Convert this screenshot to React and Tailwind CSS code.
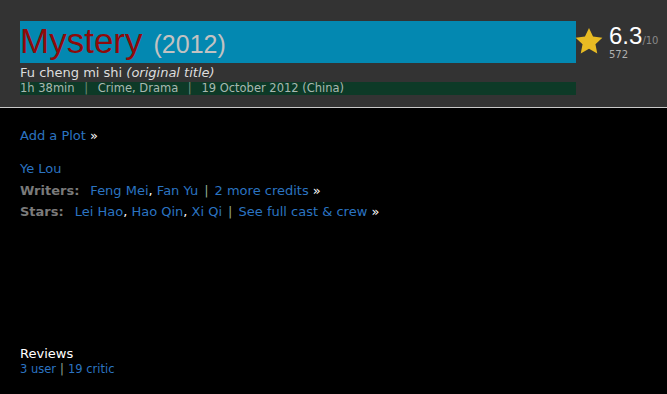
const WRITERS = ['Feng Mei', 'Fan Yu'];
const STARS = ['Lei Hao', 'Hao Qin', 'Xi Qi'];

const Link = ({ children }) => (
  <a href="#" className="text-[#2b74c2] hover:underline">{children}</a>
);

const Sep = () => <span className="text-[#8fa88f] mx-[6px]">|</span>;

const Star = () => (
  <svg width="30" height="28" viewBox="0 0 24 23" className="shrink-0">
    <path
      d="M12 0.8l3.3 7.1 7.7 0.9-5.7 5.3 1.5 7.6L12 17.9l-6.8 3.8 1.5-7.6L1 8.8l7.7-0.9z"
      fill="#e8bb23"
    />
  </svg>
);

export default function App() {
  return (
    <div
      className="w-[667px] h-[394px] bg-black text-[13px] overflow-hidden"
      style={{ fontFamily: '"DejaVu Sans", Verdana, sans-serif' }}
    >
      {/* Title header */}
      <div className="h-[108px] bg-[#333333] border-b border-[#c8c8c8] px-5 pt-[21px] flex">
        <div className="w-[556px] shrink-0">
          <h1
            className="h-[42px] bg-[#0388b1] flex items-end pb-[5px] leading-none"
            style={{ fontFamily: '"Liberation Sans", Arial, sans-serif' }}
          >
            <span className="text-[35px] text-[#8f0a0a]">Mystery</span>
            <span className="text-[25px] text-[#c2c2c2] ml-[11px] mb-[1px]">(2012)</span>
          </h1>
          <div className="text-[#dddddd] leading-[16px] mt-[2px]">
            Fu cheng mi shi <i>(original title)</i>
          </div>
          <div className="h-[13px] bg-[#0d3a27] text-[11.5px] leading-[13px] text-[#a8b8b0] mt-[1px] whitespace-nowrap">
            1h 38min <span className="mx-[6px] text-[#6f8c7c]">|</span> Crime, Drama{' '}
            <span className="mx-[6px] text-[#6f8c7c]">|</span> 19 October 2012 (China)
          </div>
        </div>
        <div className="flex items-start pt-[6px] -ml-[2px]">
          <Star />
          <div className="ml-[5px] -mt-[3px]">
            <div className="flex items-end leading-none">
              <span
                className="text-[24px] text-white"
                style={{ fontFamily: '"Liberation Sans", Arial, sans-serif' }}
              >
                6.3
              </span>
              <span className="text-[10px] text-[#8a8a8a] mb-[2px]">/10</span>
            </div>
            <div className="text-[10px] text-[#b0b0b0] leading-none mt-[2px]">572</div>
          </div>
        </div>
      </div>

      {/* Plot and credits */}
      <div className="px-5 pt-[17px]">
        <div className="leading-[21px]">
          <Link>Add a Plot</Link> <span className="text-white">»</span>
        </div>
        <div className="mt-[12px] leading-[21.5px]">
          <div><Link>Ye Lou</Link></div>
          <div className="whitespace-nowrap">
            <span className="font-bold text-[#7a7a7a] mr-[11px]">Writers:</span>
            {WRITERS.map((w, i) => (
              <span key={w}>
                <Link>{w}</Link>
                {i < WRITERS.length - 1 && <span className="text-white">, </span>}
              </span>
            ))}
            <Sep />
            <Link>2 more credits</Link> <span className="text-white">»</span>
          </div>
          <div className="whitespace-nowrap">
            <span className="font-bold text-[#7a7a7a] mr-[11px]">Stars:</span>
            {STARS.map((s, i) => (
              <span key={s}>
                <Link>{s}</Link>
                {i < STARS.length - 1 && <span className="text-white">, </span>}
              </span>
            ))}
            <Sep />
            <Link>See full cast &amp; crew</Link> <span className="text-white">»</span>
          </div>
        </div>

        {/* Reviews */}
        <div className="mt-[123px]">
          <div className="text-white leading-[16px]">Reviews</div>
          <div className="text-[11.5px] leading-[14px]">
            <Link>3 user</Link>
            <span className="text-[#8fa88f] mx-[4px]">|</span>
            <Link>19 critic</Link>
          </div>
        </div>
      </div>
    </div>
  );
}
